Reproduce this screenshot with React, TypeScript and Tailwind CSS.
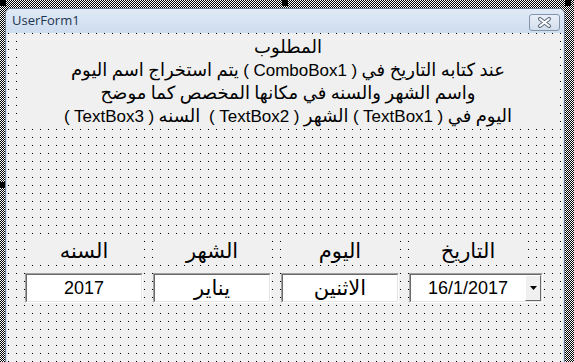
import React from "react";

const isArabic = (w: string) => /[\u0600-\u06FF]/.test(w);

// Label caption: right-to-left paragraph, centered
const Caption = ({ text }: { text: string }) => (
  <div dir="rtl" className="h-[23px] whitespace-pre text-center">
    {text.split(" ").map((w, i) => (
      <React.Fragment key={i}>
        {i > 0 && " "}
        <span className={isArabic(w) ? "text-[18px]" : "text-[17px]"}>{w}</span>
      </React.Fragment>
    ))}
  </div>
);

const lines = [
  "المطلوب",
  "عند كتابه التاريخ في ( ComboBox1 ) يتم استخراج اسم اليوم",
  "واسم الشهر والسنه في مكانها المخصص كما موضح",
  "اليوم في ( TextBox1 ) الشهر ( TextBox2 )  السنه ( TextBox3 )",
];

const Sunken = ({ children, className = "" }: { children: React.ReactNode; className?: string }) => (
  <div className={`border border-t-[#a0a0a0] border-l-[#a0a0a0] border-b-white border-r-white ${className}`}>
    <div className="h-full border border-t-[#696969] border-l-[#696969] border-b-[#e3e3e3] border-r-[#e3e3e3] bg-white">
      {children}
    </div>
  </div>
);

const Field = ({ label, value }: { label: string; value: string }) => (
  <div className="flex w-[118px] flex-col gap-[8px]">
    <div className="flex h-[28px] items-center justify-center bg-[#f0f0f0] text-[21px] text-black">
      {label}
    </div>
    <Sunken className="h-[30px]">
      <div className={`flex h-full items-center justify-center text-black ${isArabic(value) ? "text-[21px]" : "text-[18px]"}`}>
        {value}
      </div>
    </Sunken>
  </div>
);

export default function App() {
  return (
    <div className="relative h-[362px] w-[574px] overflow-hidden bg-[conic-gradient(#000_25%,#fff_0_50%,#000_0_75%,#fff_0)] bg-size-[2px_2px] pl-[5px] pt-[8px] font-['Liberation_Sans','DejaVu_Sans',sans-serif]">
      {/* Form window */}
      <div className="flex h-[370px] w-[560px] flex-col rounded-t-[6px] border border-[#6d7f94] bg-[#d5e2f1]">
        {/* Title bar */}
        <div className="flex h-[24px] items-center justify-between rounded-t-[5px] bg-[linear-gradient(#e0eaf6,#cddcef)] pl-[6px] pr-[4px]">
          <span className="font-['Open_Sans',sans-serif] text-[13px] text-[#1e3450]">UserForm1</span>
          <div className="mt-[2px] flex h-[17px] w-[31px] items-center justify-center rounded-[3px] border border-[#8394ab] bg-[linear-gradient(#e9eff8,#d3deec)]">
            <svg width="15" height="11" viewBox="0 0 15 11">
              <path d="M3 2 L12 9 M12 2 L3 9" stroke="#5d6b7c" strokeWidth="4" strokeLinecap="round" />
              <path d="M3 2 L12 9 M12 2 L3 9" stroke="#ffffff" strokeWidth="2" strokeLinecap="round" />
            </svg>
          </div>
        </div>

        {/* Form body with design grid */}
        <div className="mx-[1px] flex-1 bg-[#f0f0f0] bg-[conic-gradient(from_270deg_at_1px_1px,#000_25%,transparent_0)] bg-size-[8px_8px] bg-position-[1px_0px] pt-[3px]">
          <div className="ml-[14px] h-[91px] w-[534px] bg-[#f0f0f0] leading-[23px] text-black">
            {lines.map((l, i) => (
              <Caption key={i} text={l} />
            ))}
          </div>

          <div className="ml-[18px] mt-[110px] flex gap-[10px]">
            <Field label="السنه" value="2017" />
            <Field label="الشهر" value="يناير" />
            <Field label="اليوم" value="الاثنين" />
            <div className="flex w-[134px] flex-col gap-[8px]">
              <div className="flex h-[28px] w-[118px] items-center justify-center bg-[#f0f0f0] text-[21px] text-black">
                التاريخ
              </div>
              <Sunken className="h-[30px]">
                <div className="flex h-full">
                  <div className="flex flex-1 items-center justify-center text-[18px] text-black">16/1/2017</div>
                  <div className="flex w-[16px] items-center justify-center border border-t-white border-l-white border-b-[#696969] border-r-[#696969] bg-[#f0f0f0]">
                    <svg width="7" height="4" viewBox="0 0 7 4">
                      <path d="M0 0 H7 L3.5 4 Z" fill="#000" />
                    </svg>
                  </div>
                </div>
              </Sunken>
            </div>
          </div>
        </div>
      </div>

      {/* Selection handles */}
      <div className="absolute left-0 top-0 h-[6px] w-[6px] bg-black" />
      <div className="absolute left-[282px] top-0 h-[6px] w-[6px] bg-black" />
      <div className="absolute left-[565px] top-0 h-[6px] w-[6px] bg-black" />
      <div className="absolute left-0 top-[182px] h-[6px] w-[5px] bg-black" />
    </div>
  );
}
